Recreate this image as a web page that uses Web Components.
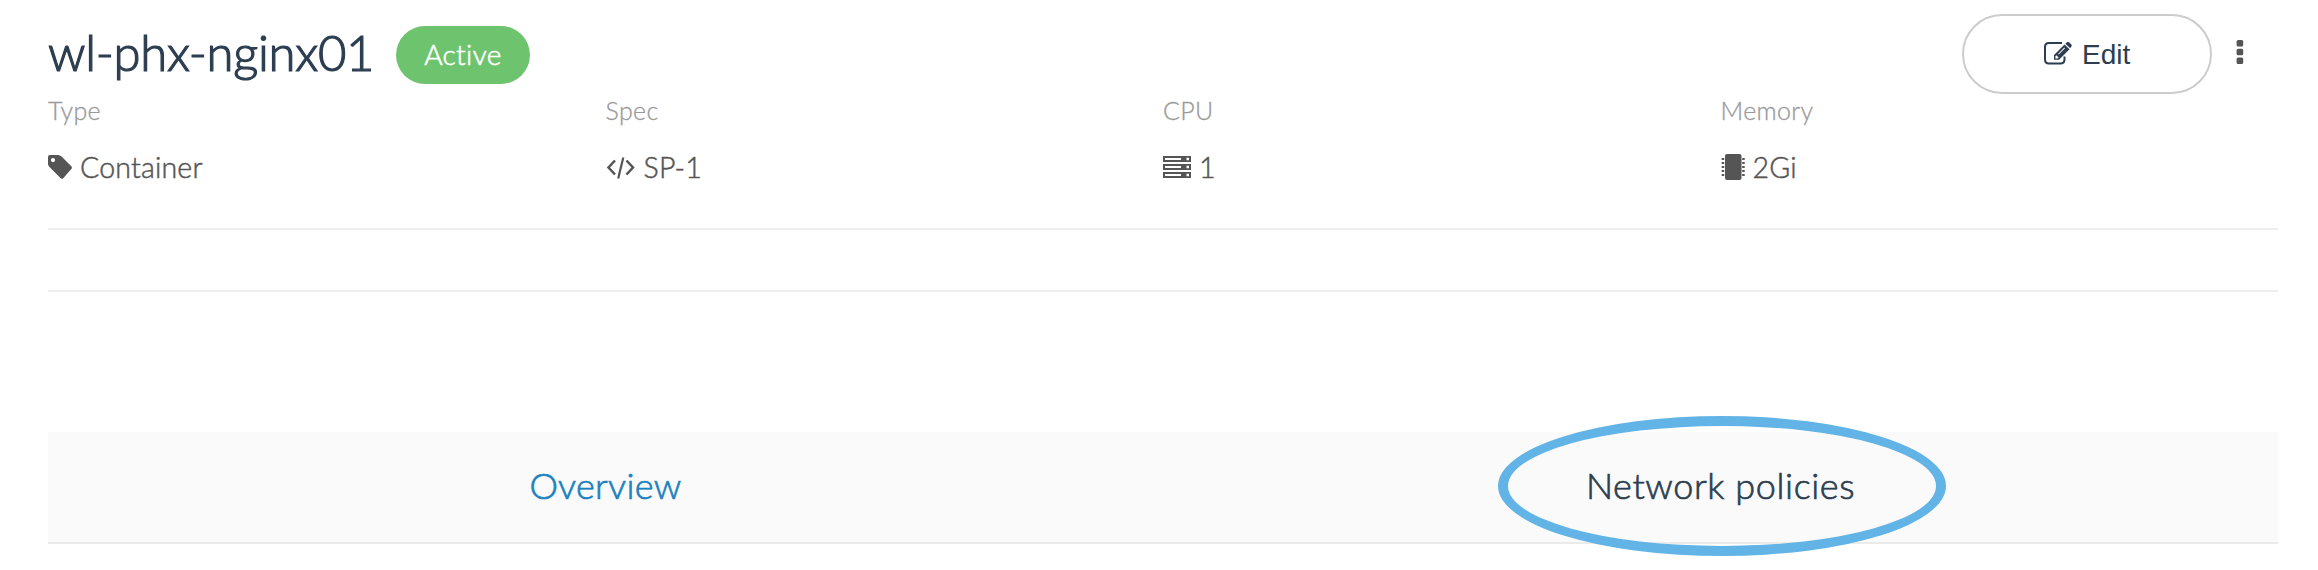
<!DOCTYPE html>
<html lang="en">
<head>
<meta charset="utf-8">
<title>wl-phx-nginx01</title>
<style>
body { margin: 0; background: #fff; font-family: Lato, "Open Sans", sans-serif; font-weight: 300; color: #555; overflow: hidden; }
</style>
</head>
<body>
<workload-page></workload-page>
<script>
const icons = {
  tag: '<svg width="24" height="24" viewBox="0 0 24 24"><path fill="currentColor" fill-rule="evenodd" d="M0 2Q0 0 2 0H10Q12 0 13.500 1.500L23.300 11.300Q24.600 12.700 23.300 14.100L15.200 23.200Q14 24.500 12.700 23.200L1.500 12Q0 10.500 0 9ZM5 3A2.100 2.100 0 1 0 5 7.200A2.100 2.100 0 1 0 5 3Z"/></svg>',
  code: '<svg width="30" height="24" viewBox="0 0 30 24"><path fill="none" stroke="currentColor" stroke-width="2.500" d="M9 5.500L2.500 12.500L9 19.500M20.500 5.500L27 12.500L20.500 19.500"/><path fill="none" stroke="currentColor" stroke-width="2.200" d="M17.300 2.500L12.200 23.500"/></svg>',
  server: '<svg width="28" height="22" viewBox="0 0 28 22"><path fill="currentColor" fill-rule="evenodd" d="M0 0H28V6H0ZM2 2V4H18V2ZM23.500 1.800V4.200H26V1.800ZM0 8H28V14H0ZM2 10V12H18V10ZM23.500 9.800V12.200H26V9.800ZM0 16H28V22H0ZM2 18V20H18V18ZM23.500 17.800V20.200H26V17.800Z"/></svg>',
  memory: '<svg width="24" height="26" viewBox="0 0 24 26"><rect x="4" y="0" width="16.500" height="26" rx="2" fill="currentColor"/><path stroke="currentColor" stroke-width="1.800" d="M0.700 5H3.200M0.700 9H3.200M0.700 13H3.200M0.700 17H3.200M0.700 21H3.200M21.200 5H23.700M21.200 9H23.700M21.200 13H23.700M21.200 17H23.700M21.200 21H23.700"/></svg>',
  edit: '<svg width="30" height="24" viewBox="0 0 30 24"><path fill="none" stroke="currentColor" stroke-width="2" d="M19 2H6Q2 2 2 6V18.500Q2 22.500 6 22.500H17.500Q21.500 22.500 21.500 18.500V15.500"/><path fill="currentColor" fill-rule="evenodd" d="M11 18.800V14L21.500 3.500L26.500 8.300L16 18.800ZM12.400 15.200V17.500H14.800L15.600 16.600L13.300 14.300ZM15 12.900L15.700 13.600L22 7.300L21.300 6.600Z"/><path fill="currentColor" d="M22.300 2.700L24 1.200Q25 .4 26 1.200L28.400 3.600Q29.200 4.600 28.400 5.600L27.200 7.300Z"/></svg>',
  dots: '<svg width="8" height="24" viewBox="0 0 8 24"><g fill="currentColor"><rect x=".6" y="0" width="6.600" height="6.400" rx="1.500"/><rect x=".6" y="8.800" width="6.600" height="6.400" rx="1.500"/><rect x=".6" y="17.600" width="6.600" height="6.400" rx="1.500"/></g></svg>'
};
function define(name, html) {
  customElements.define(name, class extends HTMLElement {
    constructor() {
      super();
      this.attachShadow({ mode: 'open' }).innerHTML = html;
    }
  });
}
customElements.define('ui-icon', class extends HTMLElement {
  connectedCallback() {
    if (this.shadowRoot) return;
    this.attachShadow({ mode: 'open' }).innerHTML =
      '<style>:host{display:block;flex:none}svg{display:block}</style>' + icons[this.getAttribute('name')];
  }
});
define('status-badge', `<style>
  :host{display:block;box-sizing:border-box;width:134px;height:58px;border-radius:29px;background:#6ec46e;color:#fff;
    font-size:28px;-webkit-text-stroke:.6px currentColor;line-height:56px;text-align:center;letter-spacing:.4px;white-space:nowrap}
</style><slot></slot>`);
define('edit-button', `<style>
  :host{display:block}
  button{display:flex;align-items:center;box-sizing:border-box;width:250px;height:80px;padding:0 0 0 79px;border:2px solid #ccc;border-radius:40px;
    background:#fff;color:#2c3e50;font:28px/32px "Liberation Sans",sans-serif}
  ui-icon{margin:0 9px 2px 0}
  span{padding-top:1px}
</style><button><ui-icon name="edit"></ui-icon><span><slot></slot></span></button>`);
define('page-header', `<style>
  :host{display:flex;height:80px;align-items:flex-start}
  h1{margin:9px 0 0;width:348px;font-size:49px;line-height:58px;font-weight:300;-webkit-text-stroke:1.2px currentColor;color:#2c3e50;white-space:nowrap;letter-spacing:-.3px}
  status-badge{margin-top:12px}
  edit-button{margin-left:auto}
  .menu{margin:26px 34px 0 24px;color:#555}
</style><h1><slot></slot></h1><status-badge>Active</status-badge><edit-button>Edit</edit-button><ui-icon class="menu" name="dots"></ui-icon>`);
define('info-field', `<style>
  :host{display:block;white-space:nowrap}
  .label{font-size:25px;line-height:32px;color:#999;-webkit-text-stroke:.3px currentColor;letter-spacing:.35px}
  .value{display:flex;align-items:center;margin-top:21px;height:40px;font-size:28.5px;line-height:40px;-webkit-text-stroke:.5px currentColor;color:#555;gap:8px;letter-spacing:.2px}
</style><div class="label"><slot name="label"></slot></div><div class="value"><slot name="icon"></slot><slot></slot></div>`);
define('tab-item', `<style>
  :host{display:flex;align-items:center;justify-content:center;position:relative;padding-bottom:5px;font-size:36px;line-height:44px;-webkit-text-stroke:.7px currentColor;color:#2c3e50;letter-spacing:.6px}
  :host([active]){color:#1a82c0;letter-spacing:.3px}
  :host([marked])::after{content:"";position:absolute;left:50%;top:-16px;width:448px;height:140px;margin-left:-223px;box-sizing:border-box;border:10px solid #62b4e6;border-radius:50%}
</style><slot></slot>`);
define('workload-page', `<style>
  :host{display:block;box-sizing:border-box;width:2318px;height:570px;padding:14px 40px 0 48px}
  .fields{display:grid;grid-template-columns:repeat(4,1fr);height:134px;border-bottom:2px solid #eee}
  .strip{height:60px;border-bottom:2px solid #eee}
  .tabs{display:grid;grid-template-columns:1fr 1fr;margin-top:140px;height:110px;background:#fafafa;border-bottom:2px solid #ebebeb}
</style>
<page-header>wl-phx-nginx01</page-header>
<div class="fields">
  <info-field><span slot="label">Type</span><ui-icon slot="icon" name="tag"></ui-icon>Container</info-field>
  <info-field><span slot="label">Spec</span><ui-icon slot="icon" name="code"></ui-icon>SP-1</info-field>
  <info-field><span slot="label">CPU</span><ui-icon slot="icon" name="server"></ui-icon>1</info-field>
  <info-field><span slot="label">Memory</span><ui-icon slot="icon" name="memory"></ui-icon>2Gi</info-field>
</div>
<div class="strip"></div>
<div class="tabs"><tab-item active>Overview</tab-item><tab-item marked>Network policies</tab-item></div>`);
</script>
</body>
</html>
